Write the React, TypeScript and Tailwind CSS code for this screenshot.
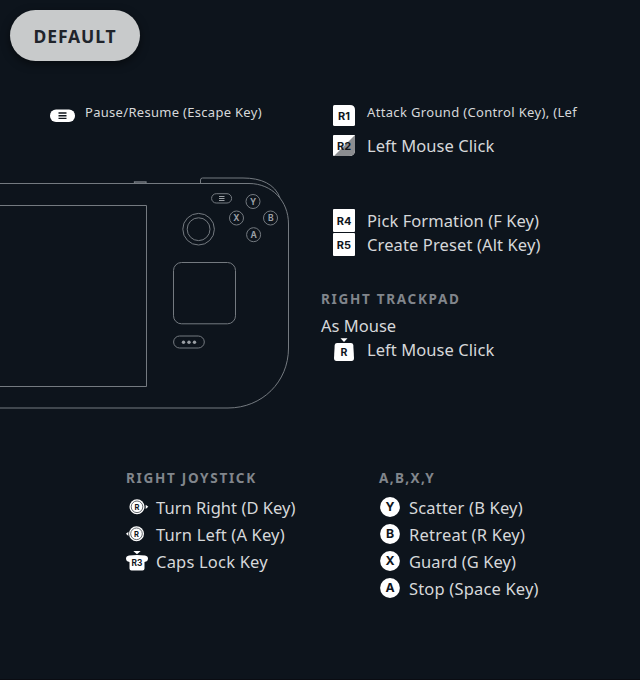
import type { ReactNode } from "react";

const INK = "#10161d";

function Glyph({ x, y, size, fill = INK, children }: { x: number; y: number; size: number; fill?: string; children: string }) {
  return (
    <text x={x} y={y} fontSize={size} fontWeight={700} fill={fill} textAnchor="middle" fontFamily="Inter, 'Noto Sans', sans-serif" className="tracking-normal">
      {children}
    </text>
  );
}

function Row({ icon, className, children }: { icon?: ReactNode; className: string; children: string }) {
  return (
    <div className={`flex items-center whitespace-nowrap ${className}`}>
      {icon}
      <span>{children}</span>
    </div>
  );
}

function Heading({ className, children }: { className: string; children: string }) {
  return (
    <h2 className={`flex h-6 items-center whitespace-nowrap pt-0.5 text-[13.5px] font-bold text-[#81868c] ${className}`}>{children}</h2>
  );
}

function ShoulderIcon({ kind }: { kind: "R1" | "R2" }) {
  return (
    <svg width="22" height="28" viewBox="0 0 22 28" className="mr-3 shrink-0">
      {kind === "R1" ? (
        <path d="M1.500 6H17Q22 6 22 11V25.500Q22 27 20.500 27H1.500Q0 27 0 25.500V7.500Q0 6 1.500 6Z" fill="#fff" />
      ) : (
        <>
          <path d="M1 3H22V18Q22 24 16 24H1Q0 24 0 23V4Q0 3 1 3Z" fill="#fff" />
          <path d="M22 3V18Q22 24 16 24H1Z" fill="#8b8d90" />
        </>
      )}
      <Glyph x={11} y={kind === "R1" ? 20.5 : 17.5} size={11}>{kind}</Glyph>
    </svg>
  );
}

function GripIcon({ label }: { label: string }) {
  return (
    <svg width="22" height="24" viewBox="0 0 22 24" className="mr-3 shrink-0">
      <rect width="22" height="23" rx="1" fill="#fff" />
      <Glyph x={11} y={15.7} size={11}>{label}</Glyph>
    </svg>
  );
}

function TrackpadIcon() {
  return (
    <svg width="22" height="24" viewBox="0 0 22 24" className="mr-3 shrink-0">
      <path d="M7.500 .3H14.500L11 4Z" fill="#fff" />
      <path d="M4 5H18Q20 5 20.300 7L21 20Q21 23 18.500 23H3.500Q1 23 1 20L1.700 7Q2 5 4 5Z" fill="#fff" />
      <Glyph x={11} y={17.8} size={10.5}>R</Glyph>
    </svg>
  );
}

function StickIcon({ side }: { side: "right" | "left" }) {
  const right = side === "right";
  const cx = right ? 11 : 10.5;
  return (
    <svg width="23" height="24" viewBox="0 0 23 24" className="mr-[7px] shrink-0">
      <circle cx={cx} cy="9.800" r="7.500" fill="#fff" />
      <circle cx={cx} cy="9.800" r="5.800" fill="none" stroke="#3a4046" strokeWidth=".8" />
      <path d={right ? "M19.700 7.700L22.300 9.800L19.700 11.900Z" : "M2.400 7.700L0 9.800L2.400 11.900Z"} fill="#fff" />
      <Glyph x={cx} y={12.5} size={7.5}>R</Glyph>
    </svg>
  );
}

function StickClickIcon() {
  return (
    <svg width="23" height="24" viewBox="0 0 23 24" className="mr-[7px] shrink-0">
      <path d="M7.300 0H14.700L11 3.300Z" fill="#fff" />
      <path d="M3 4.500Q11 3.300 19 4.500Q22 5 22 7.500Q22 10.500 18.500 11V17.500Q18.500 19.500 16.500 19.500H5.500Q3.500 19.500 3.500 17.500V11Q0 10.500 0 7.500Q0 5 3 4.500Z" fill="#fff" />
      <Glyph x={11} y={15.3} size={8.3}>R3</Glyph>
    </svg>
  );
}

function FaceIcon({ label }: { label: string }) {
  return (
    <svg width="22" height="24" viewBox="0 0 22 24" className="mr-2 shrink-0">
      <circle cx="11" cy="10" r="9.900" fill="#fff" />
      <Glyph x={11} y={14.4} size={12.3}>{label}</Glyph>
    </svg>
  );
}

function MenuIcon() {
  return (
    <svg width="26" height="26" viewBox="0 0 26 26" className="mr-[9px] shrink-0">
      <rect x="0" y="9.500" width="25" height="12.500" rx="6" fill="#fff" />
      <path d="M8.500 13H16.500M8.500 15.700H16.500M8.500 18.400H16.500" stroke={INK} strokeWidth="1.400" />
    </svg>
  );
}

function Handheld() {
  return (
    <svg width="300" height="240" viewBox="0 172 300 240" fill="none" stroke="#747a80" strokeWidth="1" className="block">
      <path d="M0 183.500H249C272 183.500 288.500 201 288.500 224V348C288.500 382 262 408 228 408H0" />
      <path d="M200.500 183.500V180Q200.500 178 202.500 178H243C261 178 275 184 280 198" />
      <path d="M134.500 183V182H146V183" strokeWidth="1.300" />
      <path d="M0 205.500H146.500V386.500H0" />
      <circle cx="198.600" cy="229.200" r="15.800" />
      <circle cx="198.600" cy="229.200" r="11.400" />
      <rect x="173.500" y="262.500" width="62" height="61.300" rx="8" />
      <rect x="211.600" y="193.700" width="20" height="9.300" rx="4.600" />
      <path d="M219 196.500H224.500M219 198.500H224.500M219 200.500H224.500" stroke="#9a9fa4" />
      <rect x="173.600" y="336" width="30.700" height="12" rx="6" />
      <g fill="#9a9fa4" stroke="none">
        <circle cx="183.500" cy="342.200" r="1.700" />
        <circle cx="189" cy="342.200" r="1.700" />
        <circle cx="194.500" cy="342.200" r="1.700" />
      </g>
      <circle cx="253" cy="201.500" r="7" />
      <circle cx="236.500" cy="218" r="7" />
      <circle cx="270.500" cy="218" r="7" />
      <circle cx="253.600" cy="234.700" r="7" />
      <g stroke="none">
        <Glyph x={253} y={204.7} size={8.5} fill="#9a9fa4">Y</Glyph>
        <Glyph x={236.5} y={221.2} size={8.5} fill="#9a9fa4">X</Glyph>
        <Glyph x={270.7} y={221.2} size={8.5} fill="#9a9fa4">B</Glyph>
        <Glyph x={253.6} y={237.9} size={8.5} fill="#9a9fa4">A</Glyph>
      </g>
    </svg>
  );
}

export default function App() {
  return (
    <main className="h-[680px] w-[640px] overflow-hidden border-b border-[#0a0c12] bg-[#0d141c] font-['Noto_Sans',sans-serif] text-[16.5px] leading-none text-[#d6d8da]">
      <header className="h-[99px] pt-2.5 pl-2.5">
        <button className="flex h-[51px] w-[130px] items-center justify-center rounded-full bg-[#c8cacb] pt-0.5 text-[17.5px] leading-none font-bold tracking-[0.9px] text-[#20242b] shadow-[0_3px_8px_rgba(0,0,0,0.5)]">
          DEFAULT
        </button>
      </header>
      <div className="flex h-[367px]">
        <section className="w-[321px]">
          <Row icon={<MenuIcon />} className="h-[27px] pl-[50px] text-[13px] tracking-[0.3px]">Pause/Resume (Escape Key)</Row>
          <div className="pt-[46px]">
            <Handheld />
          </div>
        </section>
        <section className="flex-1">
          <div className="pl-3">
            <Row icon={<ShoulderIcon kind="R1" />} className="h-[28px] pb-px text-[13px] tracking-[0.34px]">Attack Ground (Control Key), (Lef</Row>
            <Row icon={<ShoulderIcon kind="R2" />} className="mt-1 h-[30px] tracking-[0.07px]">Left Mouse Click</Row>
            <Row icon={<GripIcon label="R4" />} className="mt-12 h-6 tracking-[0.08px]">Pick Formation (F Key)</Row>
            <Row icon={<GripIcon label="R5" />} className="h-6 tracking-[0.12px]">Create Preset (Alt Key)</Row>
          </div>
          <Heading className="mt-[30px] tracking-[1.7px]">RIGHT TRACKPAD</Heading>
          <Row className="mt-[3px] h-6">As Mouse</Row>
          <Row icon={<TrackpadIcon />} className="h-6 pl-3 tracking-[0.07px]">Left Mouse Click</Row>
        </section>
      </div>
      <div className="flex pl-[126px]">
        <section className="w-[253px]">
          <Heading className="tracking-[1.7px]">RIGHT JOYSTICK</Heading>
          <Row icon={<StickIcon side="right" />} className="mt-[5px] h-[27px] tracking-[0.04px]">Turn Right (D Key)</Row>
          <Row icon={<StickIcon side="left" />} className="h-[27px] tracking-[0.16px]">Turn Left (A Key)</Row>
          <Row icon={<StickClickIcon />} className="h-[27px] tracking-[0.2px]">Caps Lock Key</Row>
        </section>
        <section>
          <Heading className="tracking-[1.4px]">A,B,X,Y</Heading>
          <Row icon={<FaceIcon label="Y" />} className="mt-[5px] h-[27px] tracking-[0.18px]">Scatter (B Key)</Row>
          <Row icon={<FaceIcon label="B" />} className="h-[27px] tracking-[0.22px]">Retreat (R Key)</Row>
          <Row icon={<FaceIcon label="X" />} className="h-[27px] tracking-[0.06px]">Guard (G Key)</Row>
          <Row icon={<FaceIcon label="A" />} className="h-[27px] tracking-[0.17px]">Stop (Space Key)</Row>
        </section>
      </div>
    </main>
  );
}
